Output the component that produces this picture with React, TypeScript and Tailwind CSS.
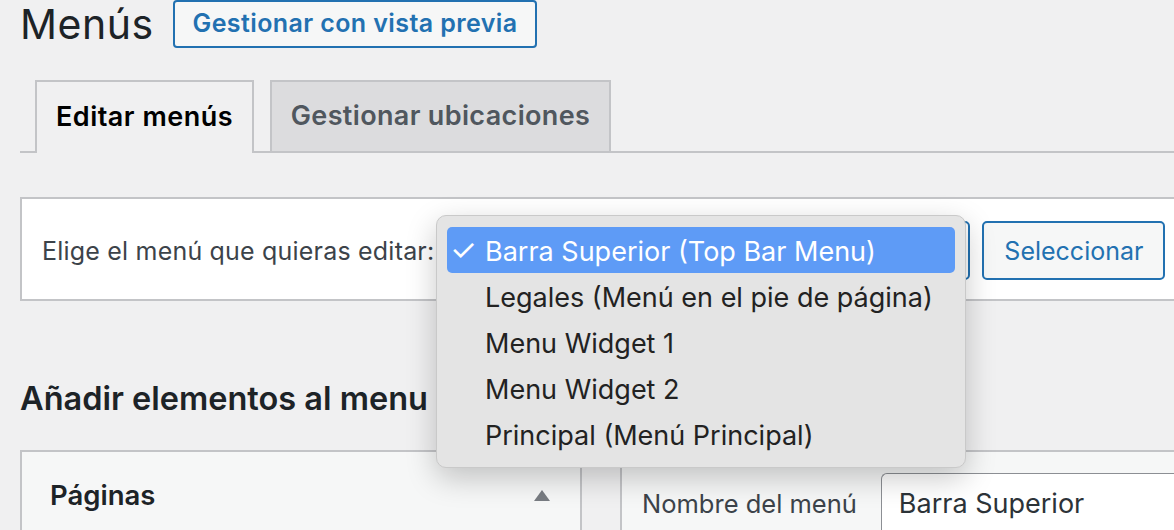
const menus = [
  'Barra Superior (Top Bar Menu)',
  'Legales (Menú en el pie de página)',
  'Menu Widget 1',
  'Menu Widget 2',
  'Principal (Menú Principal)',
];

function MenuPopup() {
  return (
    <div className="absolute left-[436px] top-[215px] w-[530px] rounded-[10px] border border-[#c9c9c9] bg-[#e4e4e4] px-[10px] pt-[11px] pb-[10px] shadow-[0_10px_30px_rgba(0,0,0,0.22)] z-10">
      {menus.map((m, i) => (
        <div
          key={m}
          className={`relative flex h-[46px] items-center rounded-[5px] pl-[38px] pt-[4px] text-[27px] ${
            i === 0 ? 'bg-[#5e9bf6] text-white' : 'text-[#222222]'
          }`}
        >
          {i === 0 && <span className="absolute left-[3px] top-[8px] text-[30px] leading-none">✓</span>}
          {m}
        </div>
      ))}
    </div>
  );
}

export default function App() {
  return (
    <div className="relative h-[530px] overflow-hidden bg-[#f0f0f1] font-['Inter',sans-serif]">
      <div className="pl-5">
        {/* Header */}
        <div className="flex h-12 items-center gap-[19px]">
          <h1 className="text-[41px] font-normal tracking-[0.5px] text-[#1d2327] leading-none">Menús</h1>
          <button className="h-12 rounded-[4px] border-2 border-[#2271b1] bg-[#f6f7f7] px-[18px] text-[25px] font-semibold tracking-[0.4px] text-[#2271b1]">
            Gestionar con vista previa
          </button>
        </div>

        {/* Tabs */}
        <div className="mt-8 flex gap-4 border-b-2 border-[#c3c4c7] pl-[15px]">
          <div className="-mb-[2px] flex h-[73px] w-[219px] items-center justify-center border-2 border-b-0 border-[#c3c4c7] bg-[#f0f0f1] text-[27px] font-semibold tracking-[0.5px] text-black">
            Editar menús
          </div>
          <div className="flex h-[71px] w-[341px] items-center justify-center border-2 border-b-0 border-[#c3c4c7] bg-[#dcdcde] text-[27px] font-semibold tracking-[0.35px] text-[#50575e]">
            Gestionar ubicaciones
          </div>
        </div>

        {/* Select menu box */}
        <div className="mt-[44px] -mr-8 flex h-[104px] items-center border-2 border-[#c3c4c7] bg-white pl-5">
          <span className="pt-[6px] text-[25px] tracking-[0.2px] text-[#3c434a]">Elige el menú que quieras editar:</span>
          <div className="ml-[6px] mt-[2px] h-[59px] w-[530px] rounded-[5px] border-2 border-[#2271b1] bg-white" />
          <button className="ml-3 mt-[2px] h-[59px] w-[183px] rounded-[5px] border-2 border-[#2271b1] bg-[#f6f7f7] pt-[3px] text-[25px] text-[#2271b1]">
            Seleccionar
          </button>
        </div>

        {/* Add items */}
        <h2 className="mt-[82px] text-[32.5px] font-semibold leading-none text-[#1d2327]">Añadir elementos al menu</h2>

        <div className="mt-[34px] flex">
          <div className="w-[562px] shrink-0 border-2 border-b-0 border-[#c3c4c7] bg-[#f6f7f7]">
            <div className="flex h-[88px] items-center justify-between pl-[28px] pr-[30px]">
              <span className="text-[27.5px] font-semibold text-[#1d2327]">Páginas</span>
              <span className="h-0 w-0 border-x-[8px] border-b-[11px] border-x-transparent border-b-[#787c82]" />
            </div>
          </div>
          <div className="ml-[38px] flex-1 border-l-2 border-t-2 border-[#c3c4c7] bg-[#f6f7f7]">
            <div className="flex items-center pl-5 pt-[21px]">
              <span className="text-[25.5px] text-[#3c434a]">Nombre del menú</span>
              <div className="ml-6 flex h-[64px] flex-1 items-center rounded-tl-[6px] border border-r-0 border-[#8c8f94] bg-white pl-[17px] text-[27px] text-[#2c3338]">
                Barra Superior
              </div>
            </div>
          </div>
        </div>
      </div>

      <MenuPopup />
    </div>
  );
}
